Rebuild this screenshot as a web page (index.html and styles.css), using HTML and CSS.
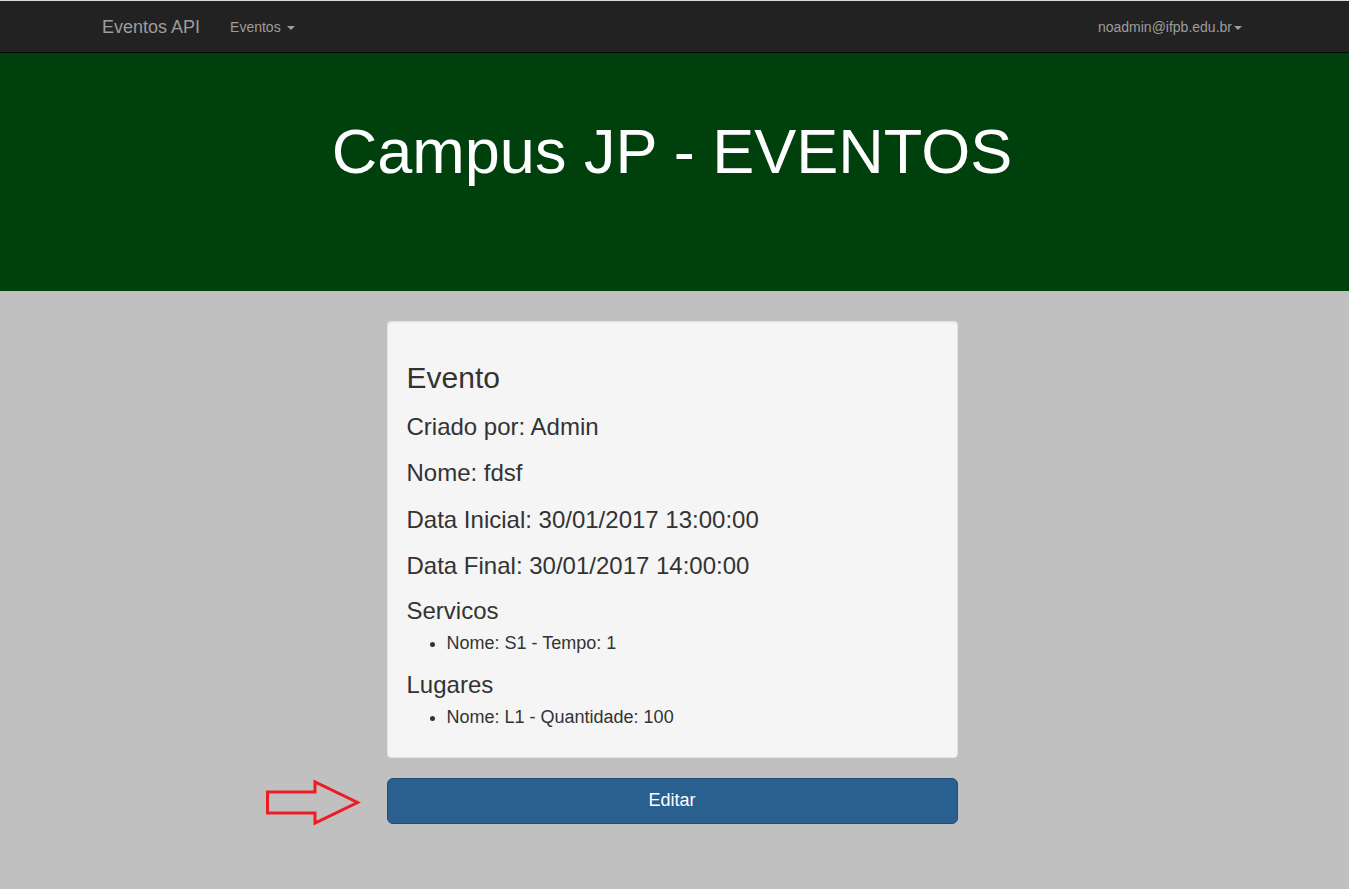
FILE: index.html
```html
<!DOCTYPE html>
<html lang="pt">
<head>
<meta charset="utf-8">
<title>Campus JP - EVENTOS</title>
<link rel="stylesheet" href="styles.css">
</head>
<body>
<nav class="navbar">
  <div class="container navbar-inner">
    <a class="brand" href="#">Eventos API</a>
    <ul class="nav">
      <li><a href="#">Eventos <span class="caret"></span></a></li>
    </ul>
    <ul class="nav nav-right">
      <li><a href="#">noadmin@ifpb.edu.br<span class="caret"></span></a></li>
    </ul>
  </div>
</nav>

<header class="jumbotron">
  <div class="container">
    <h1>Campus JP - EVENTOS</h1>
  </div>
</header>

<main class="container main">
  <section class="well">
    <h2>Evento</h2>
    <h3>Criado por: Admin</h3>
    <h3>Nome: fdsf</h3>
    <h3>Data Inicial: 30/01/2017 13:00:00</h3>
    <h3>Data Final: 30/01/2017 14:00:00</h3>
    <h3 class="sub sub-first">Servicos</h3>
    <ul class="items">
      <li>Nome: S1 - Tempo: 1</li>
    </ul>
    <h3 class="sub sub-second">Lugares</h3>
    <ul class="items items-last">
      <li>Nome: L1 - Quantidade: 100</li>
    </ul>
  </section>
  <div class="action">
    <svg class="arrow" width="100" height="50" viewBox="0 0 100 50" aria-hidden="true">
      <polygon points="3.5,14 51,14 51,4 93.5,24.5 51,45 51,35 3.5,35" fill="none" stroke="#ed1c24" stroke-width="3" stroke-linejoin="miter"/>
    </svg>
    <button class="btn" type="button">Editar</button>
  </div>
</main>
</body>
</html>
```

FILE: styles.css
```css
* { box-sizing: border-box; }

body {
  margin: 0;
  background: #c0c0c0;
  color: #333;
  font-family: "Liberation Sans", Arial, Helvetica, sans-serif;
  font-size: 14px;
  line-height: 1.42857;
}

.container {
  width: 1175px;
  padding-right: 5px;
  margin: 0 auto;
}

/* navbar */
.navbar {
  background: #222;
  border-top: 1px solid #dadada;
  border-bottom: 1px solid #080808;
}

.navbar-inner {
  display: flex;
  align-items: center;
  height: 51px;
}

.brand {
  padding: 0 15px;
  font-size: 18px;
  line-height: 20px;
  color: #9d9d9d;
  text-decoration: none;
}

.nav {
  display: flex;
  list-style: none;
  margin: 0;
  padding: 0;
}

.nav a {
  display: block;
  padding: 0 15px;
  line-height: 20px;
  color: #9d9d9d;
  text-decoration: none;
}

.nav-right {
  margin-left: auto;
}

.caret {
  display: inline-block;
  width: 0;
  height: 0;
  margin-left: 2px;
  vertical-align: middle;
  border-top: 4px solid;
  border-right: 4px solid transparent;
  border-left: 4px solid transparent;
}

/* jumbotron */
.jumbotron {
  background: #00400c;
  height: 238px;
  padding-top: 48px;
}

.jumbotron h1 {
  margin: 16px 0 0;
  color: #fff;
  font-size: 63px;
  font-weight: normal;
  line-height: 1.1;
  text-align: center;
}

/* content */
.main {
  padding-top: 30px;
  padding-bottom: 40px;
}

.well {
  width: 571px;
  margin: 0 auto 20px;
  padding: 19px;
  background: #f5f5f5;
  border: 1px solid #e3e3e3;
  border-radius: 4px;
  box-shadow: inset 0 1px 1px rgba(0, 0, 0, 0.05);
}

.well h2 {
  margin: 20px 0 10px;
  font-size: 30px;
  font-weight: normal;
  line-height: 1.1;
}

.well h3 {
  margin: 20px 0 10px;
  font-size: 24px;
  font-weight: normal;
  line-height: 1.1;
}

.well .sub-first {
  margin-top: 18px;
}

.well .sub-second {
  margin-top: 19px;
}

.items {
  margin: 0 0 10px;
  padding-left: 40px;
}

.items-last {
  margin-bottom: 11px;
}

.items li {
  font-size: 18px;
  line-height: 19px;
}

.action {
  position: relative;
  width: 571px;
  margin: 0 auto;
}

.arrow {
  position: absolute;
  left: -123px;
  top: 0;
}

.btn {
  display: block;
  width: 100%;
  padding: 10px 16px;
  font-family: inherit;
  font-size: 18px;
  line-height: 1.3333;
  color: #fff;
  background: #2a6090;
  border: 1px solid #204d74;
  border-radius: 6px;
  cursor: pointer;
}
```
